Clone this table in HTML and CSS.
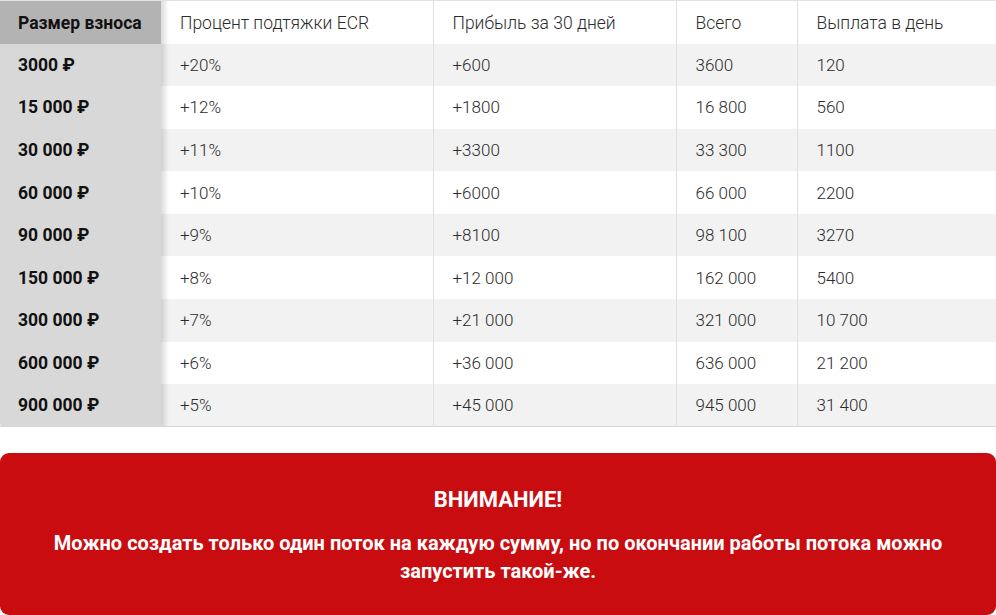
FILE: index.html
```html
<!DOCTYPE html>
<html lang="ru">
<head>
<meta charset="utf-8">
<link rel="stylesheet" href="styles.css">
</head>
<body>
<div class="wrap">
  <table class="rates">
    <colgroup>
      <col class="c1"><col class="c2"><col class="c3"><col class="c4"><col class="c5">
    </colgroup>
    <thead>
      <tr>
        <th class="fixed head">Размер взноса</th>
        <th>Процент подтяжки ECR</th>
        <th>Прибыль за 30 дней</th>
        <th>Всего</th>
        <th>Выплата в день</th>
      </tr>
    </thead>
    <tbody>
      <tr><td class="fixed">3000 ₽</td><td>+20%</td><td>+600</td><td>3600</td><td>120</td></tr>
      <tr><td class="fixed">15 000 ₽</td><td>+12%</td><td>+1800</td><td>16 800</td><td>560</td></tr>
      <tr><td class="fixed">30 000 ₽</td><td>+11%</td><td>+3300</td><td>33 300</td><td>1100</td></tr>
      <tr><td class="fixed">60 000 ₽</td><td>+10%</td><td>+6000</td><td>66 000</td><td>2200</td></tr>
      <tr><td class="fixed">90 000 ₽</td><td>+9%</td><td>+8100</td><td>98 100</td><td>3270</td></tr>
      <tr><td class="fixed">150 000 ₽</td><td>+8%</td><td>+12 000</td><td>162 000</td><td>5400</td></tr>
      <tr><td class="fixed">300 000 ₽</td><td>+7%</td><td>+21 000</td><td>321 000</td><td>10 700</td></tr>
      <tr><td class="fixed">600 000 ₽</td><td>+6%</td><td>+36 000</td><td>636 000</td><td>21 200</td></tr>
      <tr><td class="fixed last">900 000 ₽</td><td>+5%</td><td>+45 000</td><td>945 000</td><td>31 400</td></tr>
    </tbody>
  </table>

  <div class="notice">
    <h2 class="notice-title">ВНИМАНИЕ!</h2>
    <p class="notice-text">Можно создать только один поток на каждую сумму, но по окончании работы потока можно запустить такой-же.</p>
  </div>
</div>
</body>
</html>
```

FILE: styles.css
```css
html, body {
  margin: 0;
  padding: 0;
  background: #fff;
}

body {
  font-family: Roboto, "Liberation Sans", sans-serif;
  color: #333;
}

.wrap {
  width: 996px;
}

.rates {
  width: 996px;
  border-collapse: collapse;
  table-layout: fixed;
  border-top: 1px solid #e2e2e2;
  border-bottom: 1px solid #d6d6d6;
}

.c1 { width: 161px; }
.c2 { width: 272px; }
.c3 { width: 243px; }
.c4 { width: 121px; }
.c5 { width: 199px; }

.rates th,
.rates td {
  height: 42.6px;
  padding: 0 0 0 19px;
  text-align: left;
  vertical-align: middle;
  font-size: 17px;
  font-weight: 300;
  color: #2b2b2b;
  border-left: 1px solid #e0e0e0;
  box-sizing: border-box;
  white-space: nowrap;
}

.rates th {
  font-size: 17.5px;
  height: 43px;
  padding-top: 1px;
}

.rates tbody tr:nth-child(odd) td {
  background: #f2f2f2;
}

.rates tbody tr:nth-child(even) td {
  background: #fff;
}

.rates td:nth-child(2),
.rates th:nth-child(2) {
  border-left: none;
}

.rates .fixed {
  position: relative;
  border-left: none;
  padding-left: 18px;
  font-weight: 700;
  font-size: 17.5px;
  color: #111;
}

.rates .fixed::after {
  content: "";
  position: absolute;
  top: 0;
  bottom: 0;
  right: -8px;
  width: 8px;
  background: linear-gradient(to right, rgba(0, 0, 0, 0.14), rgba(0, 0, 0, 0));
  pointer-events: none;
  z-index: 2;
}

.rates tbody tr td.fixed {
  background: #d8d8d8;
}

.rates th.head {
  background: #b3b3b3;
  color: #111;
  font-weight: 700;
  font-size: 17.5px;
}

.rates td.last {
  border-bottom-left-radius: 4px;
}

.notice {
  margin-top: 26px;
  background: #c90c0f;
  border-radius: 9px;
  color: #fff;
  text-align: center;
  padding: 34px 40px 30px;
}

.notice-title {
  margin: 0 0 16px;
  font-size: 22px;
  font-weight: 700;
  line-height: 26px;
}

.notice-text {
  margin: 0 auto;
  font-size: 20px;
  font-weight: 700;
  line-height: 28px;
}
```
